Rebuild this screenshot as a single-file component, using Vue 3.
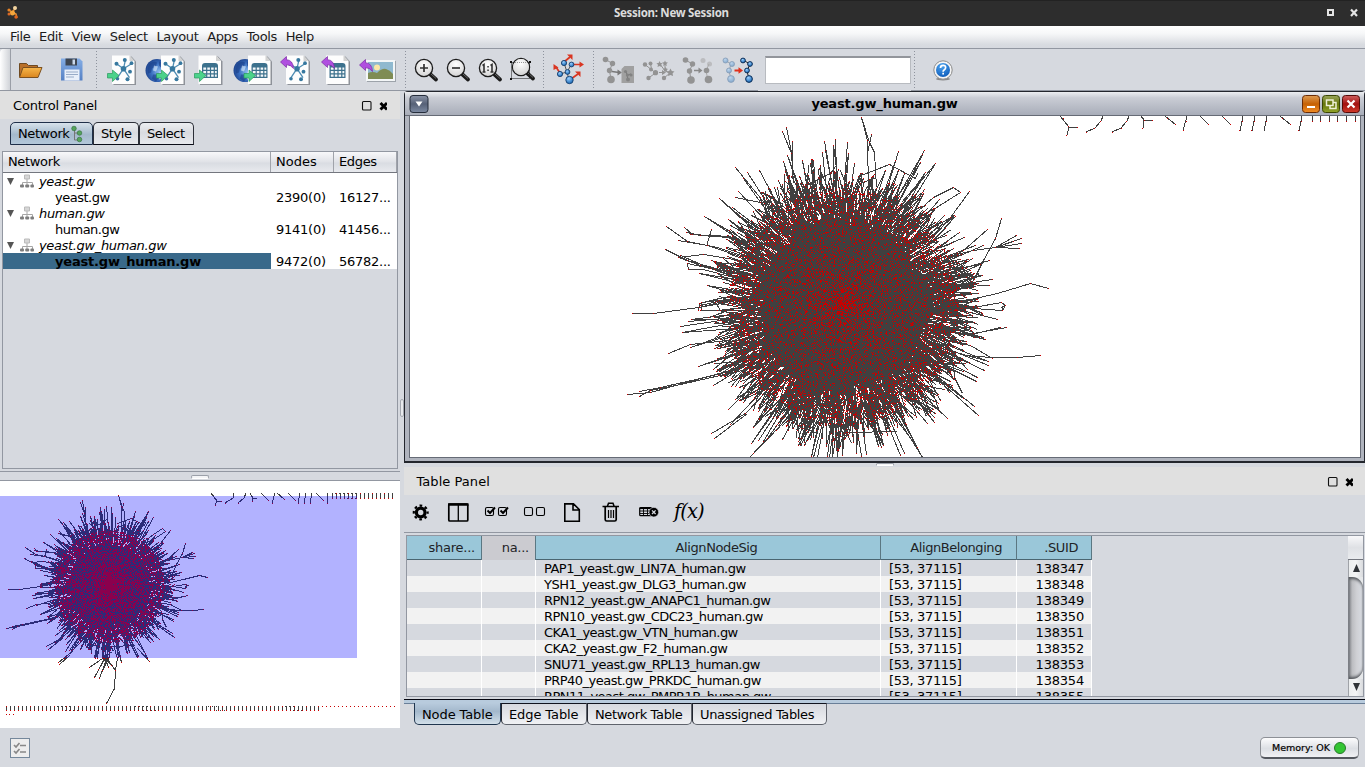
<script setup>
const menus = ['File', 'Edit', 'View', 'Select', 'Layout', 'Apps', 'Tools', 'Help']

const tree = [
  { group: true, name: 'yeast.gw' },
  { name: 'yeast.gw', nodes: '2390(0)', edges: '16127...' },
  { group: true, name: 'human.gw' },
  { name: 'human.gw', nodes: '9141(0)', edges: '41456...' },
  { group: true, name: 'yeast.gw_human.gw' },
  { name: 'yeast.gw_human.gw', nodes: '9472(0)', edges: '56782...', selected: true },
]

const rows = [
  ['PAP1_yeast.gw_LIN7A_human.gw', 138347],
  ['YSH1_yeast.gw_DLG3_human.gw', 138348],
  ['RPN12_yeast.gw_ANAPC1_human.gw', 138349],
  ['RPN10_yeast.gw_CDC23_human.gw', 138350],
  ['CKA1_yeast.gw_VTN_human.gw', 138351],
  ['CKA2_yeast.gw_F2_human.gw', 138352],
  ['SNU71_yeast.gw_RPL13_human.gw', 138353],
  ['PRP40_yeast.gw_PRKDC_human.gw', 138354],
  ['RPN11_yeast.gw_PMPR1B_human.gw', 138355],
]

const bottomTabs = ['Node Table', 'Edge Table', 'Network Table', 'Unassigned Tables']

/* ---- force-directed hairball, in thirds of a pixel ---- */
function rng(seed) {
  let a = seed
  return () => {
    a = (a + 0x6d2b79f5) | 0
    let t = Math.imul(a ^ (a >>> 15), 1 | a)
    t = (t + Math.imul(t ^ (t >>> 7), 61 | t)) ^ t
    return ((t ^ (t >>> 14)) >>> 0) / 4294967296
  }
}
const CX = 728
const CY = 582

const strands = [
  [[95, 608], [160, 609], [295, 590], [380, 575]],
  [[80, 853], [150, 845], [290, 808], [400, 778]],
  [[116, 842], [180, 832], [300, 805], [410, 778]],
  [[118, 859], [150, 840], [240, 822], [400, 785]],
  [[205, 730], [270, 703], [380, 690]],
  [[332, 968], [435, 910], [500, 840]],
  [[341, 985], [440, 908]],
  [[447, 1040], [500, 985], [560, 900]],
  [[460, 1030], [545, 940]],
  [[1320, 734], [1250, 742], [1177, 740], [1090, 735]],
  [[1177, 744], [1110, 705], [1030, 690]],
  [[1218, 650], [1120, 670], [1040, 665]],
  [[1200, 652], [1125, 668]],
  [[1192, 626], [1110, 605], [1030, 590]],
  [[1345, 534], [1291, 519], [1190, 550], [1110, 568], [1000, 580]],
  [[1204, 324], [1185, 385], [1150, 450], [1120, 510], [1060, 550]],
  [[1185, 410], [1120, 420], [1030, 440]],
  [[1249, 375], [1185, 410]], [[1262, 385], [1185, 410]],
  [[1264, 400], [1185, 410]], [[1256, 415], [1185, 410]], [[1240, 392], [1185, 410]],
  [[1202, 576], [1120, 592], [1030, 590]],
  [[1215, 586], [1205, 601], [1120, 594]],
  [[1202, 576], [1215, 586], [1203, 590], [1208, 601]],
  [[782, 20], [800, 90], [803, 240]],
  [[782, 20], [808, 95], [822, 125], [828, 230]],
  [[813, 72], [800, 130]],
  [[775, 197], [868, 162], [945, 205], [950, 190]],
  [[780, 218], [828, 202]],
  [[545, 62], [572, 130], [580, 220]],
  [[558, 52], [572, 125]], [[577, 93], [577, 200]],
  [[1060, 230], [1000, 262], [930, 320]],
  [[1080, 247], [1000, 296], [930, 330]],
  [[1060, 230], [1080, 247]],
  [[1108, 242], [1050, 320], [990, 390]],
  [[1160, 356], [1090, 420], [1030, 455]],
  [[620, 222], [690, 190], [705, 168]],
  [[262, 458], [264, 478], [310, 478], [400, 500]],
  [[262, 458], [330, 475], [430, 510]],
  [[295, 600], [296, 580], [370, 562], [440, 560]],
  [[300, 585], [350, 572], [430, 570]], [[302, 598], [302, 575], [380, 566]],
  [[296, 590], [390, 566]], [[300, 600], [350, 600], [430, 590]],
  [[345, 575], [360, 600], [440, 600]],
  [[740, 965], [890, 963]], [[550, 915], [610, 955], [655, 968]],
  [[700, 985], [740, 973], [752, 1000]],
  [[1060, 760], [1062, 800], [1085, 850]], [[1070, 600], [1070, 640]],
  [[333, 357], [318, 408]], [[405, 260], [480, 275], [540, 310]],
  [[253, 350], [275, 373], [380, 380], [450, 400]],
  [[257, 365], [300, 374], [390, 380], [440, 410]],
  [[270, 372], [390, 378]], [[235, 440], [310, 432], [420, 450]],
  [[235, 440], [300, 465], [400, 490]], [[240, 436], [310, 465]],
  [[194, 418], [260, 450], [400, 490]],
  [[197, 349], [260, 392], [350, 410], [440, 440]],
  [[233, 391], [320, 405], [430, 440]],
]
const tips = [
  [548, 154], [555, 184], [673, 92], [675, 120], [666, 127], [706, 88], [698, 106], [742, 95], [744, 130], [893, 122], [885, 150], [972, 120], [966, 132],
  [960, 155], [1006, 158], [974, 186], [973, 237], [405, 172], [440, 187], [430, 204], [477, 181], [415, 244], [358, 263], [395, 291],
  [311, 317], [384, 326], [391, 346], [296, 489], [322, 525], [354, 545], [265, 634], [272, 628], [241, 647], [247, 665], [293, 768],
  [341, 715], [345, 706], [271, 711], [340, 824], [347, 783], [372, 797], [385, 896], [391, 943], [452, 998], [458, 952], [474, 990],
  [490, 992], [545, 987], [593, 985], [604, 985], [632, 1038], [640, 1040], [652, 1040], [680, 1038], [688, 1040], [697, 1040],
  [712, 1040], [725, 1036], [768, 1030], [782, 1038], [798, 1032], [835, 1008], [850, 1005], [843, 1012], [900, 1035], [911, 1028],
  [965, 1040], [950, 1010], [982, 940], [1003, 937], [1040, 924], [1135, 914], [1122, 888], [1088, 865], [1128, 812], [1130, 800],
  [1153, 780], [1163, 766], [1163, 754], [1155, 688], [1148, 680], [1166, 450], [1140, 462], [1148, 404], [1125, 405], [1177, 506],
  [1147, 496], [1166, 525], [1133, 548], [1062, 315], [1033, 314], [1065, 318], [1018, 268], [1005, 295], [1077, 367], [1093, 382],
  [560, 134], [605, 150], [631, 160], [762, 160], [505, 234], [533, 211], [895, 180], [854, 180], [912, 190],
]

function buildNetwork(seed, s, ox, oy, nSpikes, nNodes, spread, tailed) {
  const r = rng(seed)
  const px = ([x, y]) => [Math.round(x * s + ox), Math.round(y * s + oy)]
  const edges = []
  const nodes = []
  const seg = (pts) => {
    edges.push('M' + pts.map((p) => px(p).map((v) => v + 0.5).join(' ')).join('L'))
  }
  const dot = (p) => {
    const [x, y] = px(p)
    nodes.push(`M${x} ${y + 0.5}h1`)
  }
  const wobble = (a) =>
    12 * Math.sin(a * 3 + 1) + 10 * Math.sin(a * 7 + 2) + 9 * Math.sin(a * 17) + 10 * Math.sin(a * 31 + 0.6)
  const polar = (a, d) => [CX + Math.cos(a) * d, CY + Math.sin(a) * d * (Math.sin(a) > 0 ? 1.05 : 1)]
  for (let i = 0; i < nSpikes; i++) {
    const a = r() * Math.PI * 2
    const len = r()
    const d = 268 + wobble(a) + 140 * Math.pow(len, 1.25)
    const tip = polar(a, d)
    seg([tip, polar(a + (r() - 0.5) * 0.2, d - 55 - 50 * r())])
    if (r() < 0.8) dot(tip)
  }
  for (const t of tips) {
    const a = Math.atan2(t[1] - CY, t[0] - CX)
    seg([t, polar(a + (r() - 0.5) * 0.1, 290)])
    if (r() < 0.5) seg([t, polar(a + (r() - 0.5) * 0.16, 290)])
    dot(t)
  }
  for (const line of strands) {
    seg(line)
    dot(line[0])
    if (line.length > 2) dot(line[1])
  }
  if (tailed) {
    const tail = [
      [[780, 1035], [764, 1120], [758, 1230], [708, 1325]],
      [[700, 1030], [764, 1120]], [[745, 1000], [600, 1098]], [[710, 1020], [632, 1160]],
      [[715, 1030], [664, 1168]], [[705, 1030], [660, 1110]], [[730, 1030], [685, 1120]],
      [[500, 990], [407, 1070]], [[480, 1015], [415, 1080]], [[900, 980], [978, 1063]],
      [[790, 1020], [800, 1068]], [[690, 1030], [742, 1090]], [[700, 1040], [720, 1100]],
    ]
    tail.forEach((l) => { seg(l); dot(l[l.length - 1]) })
  }
  for (let i = 0; i < nNodes; i++) {
    const a = r() * Math.PI * 2
    const d = 345 * Math.pow(r(), spread)
    dot(polar(a, d))
  }
  const core = []
  for (let i = 0; i < 150; i++) {
    const a = (i / 150) * Math.PI * 2
    const p = polar(a, 244 + wobble(a) * 0.6 + r() * 18)
    core.push(`${p[0] * s + ox} ${p[1] * s + oy}`)
  }
  return { edges: edges.join(''), nodes: nodes.join(''), core: core.join(',') }
}

const main = buildNetwork(7, 1 / 3, 600 - 410, 110 - 116, 2300, 8200, 0.76, false)
const mini = buildNetwork(21, 0.1593, -6.8, 577.3 - 534 * 0.16 - 481, 1000, 6800, 0.8, true)

/* small components laid out to the right of the main one */
const satellites =
  'M650 0L659 11L668 12M659 11L657 19M693 0L691 5L685 12L676 16M719 0L717 5L711 12L702 16M731 0L734 4L743 5M734 4L733 12' +
  'M755 0L766 9M777 0L773 15M790 0L799 9M812 0L821 9M833 0L830 15M845 0L842 15M857 0L854 15M870 0L881 9M892 0L889 15'
const satelliteDots =
  'M653 2h1M667 11h1M656 19h1M658 10h1M690 5h1M684 12h1M676 16h1M716 5h1M711 12h1M702 16h1M734 4h1M742 4h1M732 12h1M765 8h1M757 2h1M776 5h1M773 14h1M798 8h1M820 8h1M814 2h1M832 5h1M829 14h1M844 5h1M841 14h1M856 5h1M880 8h1M872 2h1M891 5h1M888 14h1'
const pairs = Array.from({ length: 6 }, (_, i) => 901.5 + i * 8.6)
const pairEdges = pairs.map((x) => `M${Math.round(x)}.5 0v5`).join('')
const pairDots = pairs.map((x) => `M${Math.round(x)} 5.5h1`).join('')

const miniSat =
  'M211 12L217 20L221 20M217 20L215 24M234 12L233 17L225 22M246 12L244 17L238 22M250 12L253 17L257 17M253 17L252 20M261 12L268 19M275 12L272 22M277 12L284 18M288 12L295 19M300 12L298 22M306 12L304 22M312 12L310 22M316 12L323 19M328 12L327 22'
const tickRow = (from, to, y, h) => {
  let e = ''
  let n = ''
  for (let x = from; x <= to; x += 4) {
    e += `M${x}.5 ${y}v${h}`
    if (x % 3 === 0) n += `M${x} ${y + 0.5}h1`
    n += `M${x} ${y + h - 0.5}h1`
  }
  return [e, n]
}
const topTicks = tickRow(332, 394, 12, 6)
const bottomTicks = tickRow(6, 320, 225, 5)
let looseDots = 'M6 233.5h1M9 233.5h1M13 233.5h1'
for (let x = 322; x < 396; x += 4) looseDots += `M${x} 225.5h1`
let hooks = ''
for (const x of [57, 61, 65, 69, 135, 139, 143, 147, 208, 212, 216, 285, 289, 293]) hooks += `M${x} 225.5h1`
for (const x of [65, 69, 73, 77, 143, 147, 151, 155, 216, 220, 224, 293, 297, 301]) hooks += `M${x} 229.5h1`
for (const x of [335, 339, 343, 347, 351, 355]) hooks += `M${x} 12.5h1`
for (const x of [347, 351, 355]) hooks += `M${x} 17.5h1`
</script>

<template>
  <div class="app">
    <svg class="defs" width="0" height="0">
      <defs>
        <linearGradient id="gFolder" x1="0" y1="0" x2="0" y2="1"><stop offset="0" stop-color="#f7b64a" /><stop offset="1" stop-color="#d9851e" /></linearGradient>
        <linearGradient id="gDisk" x1="0" y1="0" x2="0" y2="1"><stop offset="0" stop-color="#85aee6" /><stop offset="1" stop-color="#5580c4" /></linearGradient>
        <radialGradient id="gGlobe" cx=".6" cy=".55" r=".7"><stop offset="0" stop-color="#8fbdf0" /><stop offset=".5" stop-color="#3a6fc0" /><stop offset="1" stop-color="#16367c" /></radialGradient>
        <radialGradient id="gLens" cx=".5" cy=".3" r=".7"><stop offset="0" stop-color="#fff" /><stop offset="1" stop-color="#d4d4d4" /></radialGradient>
        <radialGradient id="gBall" cx=".4" cy=".3" r=".7"><stop offset="0" stop-color="#9ad0ff" /><stop offset="1" stop-color="#1767b5" /></radialGradient>
        <radialGradient id="gHelp" cx=".4" cy=".2" r=".9"><stop offset="0" stop-color="#4da3ee" /><stop offset="1" stop-color="#0a58b8" /></radialGradient>
        <g id="page">
          <path d="M1.500 1.500h18l4.500 5v23.500h-22.500z" fill="#8e9299" />
          <path d="M0 .5h17.500l5 5.500v23H0z" fill="#fdfdfd" />
          <path d="M17.500.5v5.500H22.500z" fill="#d2d2d2" />
        </g>
        <g id="netGlyph">
          <path d="M0 0L2-9M0 0L8-5M0 0L-7-5M0 0L6 9M0 0L-6 9" stroke="#4f8db3" stroke-width="1.300" />
          <g fill="#37789f"><circle r="2.800" /><circle cx="1.300" cy="-8.800" r="2" /><circle cx="8" cy="-5.500" r="1.900" /><circle cx="-7" cy="-5" r="2" /><circle cx="6.500" cy="3" r="1.900" /><circle cx="4" cy="10.500" r="2" /><circle cx="-6" cy="10" r="1.800" /></g>
        </g>
        <g id="gridGlyph">
          <path d="M0 3q0-3 3-3h10q3 0 3 3v12H0z" fill="#3c718d" />
          <path d="M1.300 4.500h2.800v2.300H1.300zm4 0h2.600v2.300H5.300zm3.800 0h2.600v2.300H9.100zm3.800 0h1.900v2.300h-1.900zM1.300 8h2.800v2.300H1.300zm4 0h2.600v2.300H5.300zm3.800 0h2.600v2.300H9.100zm3.800 0h1.900v2.300h-1.900zM1.300 11.500h2.800v2.300H1.300zm4 0h2.600v2.300H5.300zm3.800 0h2.600v2.300H9.100zm3.800 0h1.900v2.300h-1.900z" fill="#f4f7f9" />
        </g>
        <path id="inArrow" d="M0 3.500h5V0l6.500 5.500L5 11.500V8H0z" fill="#4bd28b" stroke="#2b9a5c" stroke-width=".7" />
        <path id="outArrow" d="M0 5.500L6 0v3.200q6.500.300 7 8.800Q10 8 6 8.200V11z" fill="#b04fe0" stroke="#7b2ba4" stroke-width=".7" />
        <g id="globe">
          <circle r="11.500" fill="url(#gGlobe)" />
          <path d="M-7-7Q-3-10 0-8l-1 4-4 2-1 4-3 1Q-10-3-7-7zM2-9q6 1 7 6l-4 1-3-3zM-4 4l5 0 1 3-3 4-4-3z" fill="#1b3f88" opacity=".6" />
          <path d="M-3-5l4 1-2 5-3-1zM2 2l5-1-2 7-3 1z" fill="#d6e9fc" opacity=".65" />
        </g>
        <g id="lens">
          <path d="M6.500 6.500l5.500 5" stroke="#1b1b1b" stroke-width="3.800" stroke-linecap="round" />
          <path d="M7 6l5 4.500" stroke="#777" stroke-width=".8" />
          <circle r="8.600" fill="url(#gLens)" stroke="#1c1c1c" stroke-width="1.300" />
        </g>
        <g id="grayNet">
          <path d="M0 0l7 4-3 7 1.500 9" stroke="currentColor" fill="none" />
          <g fill="currentColor"><circle r="2.800" /><circle cx="7" cy="4" r="2.700" /><circle cx="4" cy="11" r="2.700" /><circle cx="5.500" cy="20" r="3.800" /></g>
        </g>
      </defs>
    </svg>

    <header class="titlebar">
      <svg class="logo" width="12" height="14" viewBox="0 0 12 14"><path d="M9 2L5 6 2 4M5 6l4 2 1 4M5 6L2 8M5 6l3-3" stroke="#e88b2d" stroke-width="1.500" fill="none" /><circle cx="8" cy="2" r="2" fill="#f2d4a0" /><circle cx="5.500" cy="7" r="2.500" fill="#f3a63d" /><circle cx="9" cy="11" r="1.700" fill="#df641d" /><circle cx="2" cy="4" r="1.600" fill="#e88325" /><circle cx="2" cy="8" r="1.500" fill="#db6924" /></svg>
      <span class="session">Session: New Session</span>
      <svg class="wm" width="32" height="10" viewBox="0 0 32 10"><path d="M2 2h5v5H2z" fill="none" stroke="#e4e4e4" stroke-width="2" /><path d="M25 1.500l6 6.500M31 1.500L25 8" stroke="#e4e4e4" stroke-width="2.200" /></svg>
    </header>

    <nav class="menubar"><span v-for="m in menus" :key="m">{{ m }}</span></nav>

    <div class="toolbar">
      <i class="grip"></i>
      <svg width="40" height="41" viewBox="10 49 40 41">
        <path d="M19.500 63.500h7l2 2h9v11h-18z" fill="#b9702a" stroke="#6f4a22" />
        <path d="M23 67.500h19l-4 10H19.500z" fill="url(#gFolder)" stroke="#7b5020" />
      </svg>
      <svg width="44" height="41" viewBox="50 49 44 41">
        <path d="M61 58.500h18.500l3 3V80.500H61z" fill="url(#gDisk)" />
        <path d="M65.500 58.500h11.500v7H65.500z" fill="#3e4652" /><path d="M72.500 59.500h2.500v5h-2.500z" fill="#cad8ea" />
        <path d="M64.500 69.500h15v11h-15z" fill="#e9effa" /><path d="M66 72h12M66 74.500h12M66 77h8" stroke="#98abc8" />
      </svg>
      <i class="sep"></i>
      <svg width="44" height="41" viewBox="99 49 44 41"><use href="#page" x="112" y="55" /><use href="#netGlyph" x="123.500" y="68.700" /><use href="#inArrow" x="107.500" y="70" /></svg>
      <svg width="44" height="41" viewBox="143 49 44 41"><use href="#globe" x="157" y="70.500" /><use href="#page" x="161" y="55" /><use href="#netGlyph" x="172.500" y="68.700" /><use href="#inArrow" x="156.500" y="70" /></svg>
      <svg width="42" height="41" viewBox="187 49 42 41"><use href="#page" x="198.500" y="55" /><use href="#gridGlyph" x="202" y="63" /><use href="#inArrow" x="194.500" y="70" /></svg>
      <svg width="46" height="41" viewBox="229 49 46 41"><use href="#globe" x="245" y="70.500" /><use href="#page" x="248" y="55" /><use href="#gridGlyph" x="251.500" y="63" /><use href="#inArrow" x="244" y="70" /></svg>
      <svg width="40" height="41" viewBox="275 49 40 41"><use href="#page" x="286" y="55" /><use href="#netGlyph" x="297" y="68.700" /><use href="#outArrow" x="280.500" y="56.500" /></svg>
      <svg width="40" height="41" viewBox="315 49 40 41"><use href="#page" x="326" y="55" /><use href="#gridGlyph" x="329.500" y="63" /><use href="#outArrow" x="321.500" y="56.500" /></svg>
      <svg width="44" height="41" viewBox="355 49 44 41">
        <path d="M367 61h29v21h-29z" fill="#9da3aa" /><path d="M366 60h29v21h-29z" fill="#f3f6f7" /><path d="M368 62h25v17h-25z" fill="#8fb9cf" />
        <circle cx="377" cy="67.500" r="3" fill="#fbe6a6" /><path d="M368 73q5-2 9 0 5-5 9-4 4 1 7 5v5h-25z" fill="#7f8c54" />
        <use href="#outArrow" x="359.500" y="59.500" />
      </svg>
      <i class="sep s1"></i>
      <svg class="z0" width="32" height="41" viewBox="410 49 32 41"><use href="#lens" x="424" y="68" /><path d="M424 64v8M420 68h8" stroke="#333" stroke-width="1.700" /></svg>
      <svg width="32" height="41" viewBox="442 49 32 41"><use href="#lens" x="456" y="68" /><path d="M452 68h8" stroke="#333" stroke-width="1.700" /></svg>
      <svg width="32" height="41" viewBox="474 49 32 41"><use href="#lens" x="488" y="68" /><path d="M482.500 65.500l1.500-1v7.500M482.500 72h3M490.500 65.500l1.500-1v7.500M490.500 72h3" fill="none" stroke="#333" stroke-width="1.600" /><path d="M487.300 66h1.500v1.500h-1.500zm0 3.500h1.500v1.500h-1.500z" fill="#333" /></svg>
      <svg width="32" height="41" viewBox="506 49 32 41"><use href="#lens" x="521" y="67" /><path d="M511.500 62.500h18v16h-18z" fill="none" stroke="#111" stroke-dasharray="1 1" /><circle cx="521" cy="67" r="7.900" fill="url(#gLens)" /><path d="M515 62.500h12" stroke="#999" stroke-dasharray="1 1" /><path d="M510 61h2v2h-2zm19 0h2v2h-2zm-19 17h2v2h-2z" fill="#111" /></svg>
      <i class="sep s2"></i>
      <svg class="z0" width="40" height="41" viewBox="548 49 40 41">
        <g stroke="#d93622" stroke-width="1.700" fill="#d93622"><path d="M564 62l6-5M572 64.500h8M560 73l-4-6M571 79l7-5" /><path d="M567 54.500h5.500v5.500zM579.500 61.500l4.500 3-4.500 3zM553.500 70v-6l5 3.500zM575 71.500h5.500v5.500z" stroke="none" /></g>
        <path d="M564 63l3 9 4-7M560 74l7-2 2 8" stroke="#555" fill="none" />
        <g fill="url(#gBall)" stroke="#173f6d" stroke-width=".9"><circle cx="564" cy="63" r="2.600" /><circle cx="571.500" cy="64.500" r="2.400" /><circle cx="560" cy="74" r="2.600" /><circle cx="567.500" cy="72" r="2.400" /><circle cx="569.500" cy="80" r="3.700" /></g>
      </svg>
      <i class="sep s2"></i>
      <svg class="z0 muted" width="40" height="41" viewBox="598 49 40 41"><use href="#grayNet" x="605.500" y="59.500" /><path d="M612 71.500l7 1" stroke="#777" stroke-width="1.300" /><path d="M617.500 69.500l4.500 3-4.500 3z" fill="#777" /><path d="M621.500 69l3-3h9.500v17h-12.500z" fill="#a0a0a0" /><path d="M626 71l1 4 1 5M627 75l4-1" stroke="#777" fill="none" /><g fill="#828282"><circle cx="625.500" cy="71.500" r="1.600" /><circle cx="627.500" cy="75" r="1.600" /><circle cx="631" cy="75" r="1.600" /><circle cx="628" cy="79.500" r="2" /></g></svg>
      <svg class="muted" width="40" height="41" viewBox="638 49 40 41"><g fill="#939393" stroke="#939393"><path d="M645 64.500l10 8M650.500 63.500l1 5.500M655.500 73l-7 5M659 72.500h4M660 64l5 7 5 2-6 5M665 64l0 6" fill="none" /><g stroke="none"><circle cx="645" cy="64.500" r="2.200" /><circle cx="650.500" cy="63.500" r="2" /><circle cx="651" cy="69.500" r="2" /><circle cx="655.500" cy="72.700" r="2.600" /><circle cx="648.500" cy="78" r="2.200" /><circle cx="664" cy="78" r="2.200" /><path d="M662 70l4 2.500-4 2.500zM659.500 61l1 2 2.200.3-1.600 1.500.5 2.200-2.100-1-2 1 .5-2.200-1.600-1.500 2.200-.3zM665 60.500l.9 1.800 2 .3-1.500 1.300.4 2-1.800-.9-1.800.9.4-2-1.500-1.300 2-.3zM670.500 68.500l1.300 2.500 2.700.4-1.900 1.900.4 2.700-2.500-1.100-2.500 1.100.4-2.700-1.900-1.900 2.700-.4zM665.500 67l.8 1.600 1.700.3-1.200 1.200.3 1.700-1.600-.8-1.600.8.3-1.700-1.200-1.200 1.700-.3z" /></g></g></svg>
      <svg class="muted" width="40" height="41" viewBox="678 49 40 41"><use href="#grayNet" x="685.500" y="60" /><g fill="#bbbcbf"><circle cx="703" cy="60.500" r="2.500" /><circle cx="709.500" cy="64" r="2.500" /></g><path d="M709 64l-3 7 2 9" stroke="#aaa" fill="none" /><circle cx="706.500" cy="70.500" r="2.800" fill="#939393" /><circle cx="708.500" cy="79.500" r="3.800" fill="#939393" /><path d="M694 70.500h6" stroke="#888" stroke-width="1.500" /><path d="M698.500 67.500l4 3-4 3z" fill="#888" /></svg>
      <svg width="40" height="41" viewBox="718 49 40 41">
        <g opacity=".42"><path d="M725 60l6 4-2 7 2 8" stroke="#456" fill="none" /><g fill="url(#gBall)" stroke="#174a80" stroke-width=".8"><circle cx="725.500" cy="60.500" r="2.500" /><circle cx="732" cy="64" r="2.500" /><circle cx="729" cy="70.500" r="2.500" /><circle cx="731" cy="79" r="3.400" /></g></g>
        <path d="M743 60l7 4-3 7 2 8" stroke="#222" fill="none" /><g fill="url(#gBall)" stroke="#0e2f58" stroke-width="1"><circle cx="743" cy="60.500" r="2.400" /><circle cx="750" cy="64" r="2.400" /><circle cx="747" cy="70.500" r="2.400" /><circle cx="749" cy="79" r="3.400" /></g>
        <path d="M734.500 70.500h5" stroke="#e0301c" stroke-width="2" /><path d="M738.500 67.300l4.500 3.200-4.500 3.200z" fill="#e0301c" />
      </svg>
      <div class="searchwrap"><div class="search"></div></div>
      <i class="sep s3"></i>
      <svg class="help" width="40" height="41" viewBox="923 49 40 41"><ellipse cx="943" cy="79" rx="7" ry="1.500" fill="#888" /><circle cx="943" cy="70" r="9.200" fill="#f5f5f5" stroke="#8c8c8c" /><circle cx="943" cy="70" r="7" fill="url(#gHelp)" /><path d="M940.500 68q0-2.600 2.600-2.600t2.500 2.300q0 1.300-1.500 2.200-1 .6-1 1.800" fill="none" stroke="#fff" stroke-width="1.700" /><path d="M942.300 72.800h1.700v1.800h-1.700z" fill="#fff" /></svg>
    </div>

    <div class="body">
      <aside class="left">
        <div class="phead"><span>Control Panel</span>
          <svg width="26" height="12" viewBox="0 0 26 12"><rect x="1.500" y="1.500" width="8.500" height="8.500" rx="1" fill="none" stroke="#111" stroke-width="1.100" /><path d="M19.500 3l6.500 6.500M26 3l-6.500 6.500" stroke="#000" stroke-width="2.900" /></svg>
        </div>
        <div class="tabs">
          <span class="tab on">Network<svg width="12" height="18" viewBox="0 0 12 18"><path d="M3.500 3v12h5M3.500 8h5" fill="none" stroke="#777" /><g fill="#56a35c" stroke="#2d6c37" stroke-width=".6"><circle cx="3" cy="3.500" r="2.300" /><circle cx="8.500" cy="8" r="2.300" /><circle cx="8.500" cy="14.500" r="2.300" /></g></svg></span>
          <span class="tab t2">Style</span><span class="tab t3">Select</span>
        </div>
        <div class="netbox">
          <div class="nrow nhead"><span>Network</span><span>Nodes</span><span>Edges</span></div>
          <div v-for="(t, i) in tree" :key="i" class="nrow" :class="{ sel: t.selected, grp: t.group }">
            <span class="nname">
              <svg v-if="t.group" width="31" height="16" viewBox="0 0 31 16"><path d="M4 5h7L7.500 12z" fill="#555" /><g stroke="#a6a6a6"><path d="M24 6v7M19.500 12v-2.500h10V12" fill="none" /></g><path d="M21.500 2h5v4h-5z" fill="#d6d6d6" stroke="#bbb" /><g fill="#7d7d7d"><rect x="17" y="11.500" width="4" height="3" rx="1" /><rect x="22.200" y="11.500" width="4" height="3" rx="1" /><rect x="27.400" y="11.500" width="3.600" height="3" rx="1" /></g></svg>
              <b>{{ t.name }}</b>
            </span>
            <span>{{ t.nodes }}</span><span>{{ t.edges }}</span>
          </div>
        </div>
        <div class="divider"><i></i></div>
        <svg class="mini" width="400" height="247" viewBox="0 0 400 247" shape-rendering="crispEdges">
          <polygon :points="mini.core" fill="#404040" />
          <g fill="none" stroke="#404040"><path :d="mini.edges" /><path :d="miniSat" /><path :d="topTicks[0]" /><path :d="bottomTicks[0]" /><path :d="hooks" /></g>
          <g stroke="#c80000"><path :d="mini.nodes" /><path :d="topTicks[1]" /><path :d="bottomTicks[1]" /><path :d="looseDots" /><path d="M215 24.500h1M221 20.500h1M225 22.500h1M238 22.500h1M252 20.500h1M268 19.500h1M272 22.500h1M284 18.500h1M295 19.500h1M298 22.500h1M304 22.500h1M310 22.500h1M323 19.500h1M327 22.500h1" /></g>
          <rect y="15" width="357" height="162" fill="#00f" fill-opacity=".3" />
        </svg>
      </aside>

      <i class="vsplit"><i></i></i>

      <main class="right">
        <section class="frame">
          <div class="ftitle">
            <svg width="20" height="20" viewBox="0 0 20 20"><defs><linearGradient id="gBtn" x1="0" y1="0" x2="0" y2="1"><stop offset="0" stop-color="#8a93a6" /><stop offset=".5" stop-color="#566177" /><stop offset="1" stop-color="#7d8aa2" /></linearGradient></defs><rect x="1" y="1.500" width="18" height="17" rx="3" fill="url(#gBtn)" stroke="#252d3b" /><path d="M6.500 7.500h7L10 12.500z" fill="#fff" /></svg>
            <b>yeast.gw_human.gw</b>
            <svg width="60" height="20" viewBox="0 0 60 20">
              <defs>
                <linearGradient id="gMin" x1="0" y1="0" x2="0" y2="1"><stop offset="0" stop-color="#dd9c54" /><stop offset=".5" stop-color="#c66104" /><stop offset="1" stop-color="#f08d26" /></linearGradient>
                <linearGradient id="gMax" x1="0" y1="0" x2="0" y2="1"><stop offset="0" stop-color="#9aa65c" /><stop offset=".5" stop-color="#65750a" /><stop offset="1" stop-color="#92a52b" /></linearGradient>
                <linearGradient id="gClose" x1="0" y1="0" x2="0" y2="1"><stop offset="0" stop-color="#d06060" /><stop offset=".5" stop-color="#a31210" /><stop offset="1" stop-color="#d03a2a" /></linearGradient>
              </defs>
              <rect x="2.500" y="1.500" width="17" height="17" rx="3" fill="url(#gMin)" stroke="#6a2c06" /><path d="M7 13h8" stroke="#fff" stroke-width="2" />
              <rect x="22.500" y="1.500" width="17" height="17" rx="3" fill="url(#gMax)" stroke="#3b4605" /><path d="M26.500 6h6.500v5.500h-6.500zM33 8.500h3v6h-6V12" fill="none" stroke="#eef0d8" stroke-width="1.500" />
              <rect x="42.500" y="1.500" width="17" height="17" rx="3" fill="url(#gClose)" stroke="#540a08" /><path d="M47.500 6.500l7 7M54.500 6.500l-7 7" stroke="#fff" stroke-width="2.200" />
            </svg>
          </div>
          <svg class="view" width="950" height="341" viewBox="0 0 950 341" shape-rendering="crispEdges">
            <polygon :points="main.core" fill="#404040" />
            <path :d="main.edges" fill="none" stroke="#404040" />
            <path :d="main.nodes" stroke="#c80000" />
            <path :d="satellites" fill="none" stroke="#404040" />
            <path :d="pairEdges" stroke="#404040" />
            <path :d="satelliteDots" stroke="#c80000" transform="translate(0 .5)" />
            <path :d="pairDots" stroke="#c80000" />
          </svg>
        </section>
        <div class="hsplit"><i></i></div>
        <div class="phead"><span>Table Panel</span>
          <svg width="26" height="12" viewBox="0 0 26 12"><rect x="1.500" y="1.500" width="8.500" height="8.500" rx="1" fill="none" stroke="#111" stroke-width="1.100" /><path d="M19.500 3l6.500 6.500M26 3l-6.500 6.500" stroke="#000" stroke-width="2.900" /></svg>
        </div>
        <div class="ttools">
          <svg width="270" height="37" viewBox="404 495 270 37" fill="none" stroke="#000">
            <circle cx="420.700" cy="512.500" r="4.300" stroke-width="3.200" /><circle cx="420.700" cy="512.500" r="6.900" stroke-width="2.200" stroke-dasharray="2.700 2.719" stroke-dashoffset="1.350" />
            <rect x="448.800" y="504" width="19" height="17" rx="1" stroke-width="1.700" /><path d="M448 504.500h20.500" stroke-width="2.500" /><path d="M458.300 504v17" stroke-width="1.300" />
            <g id="chk"><rect x="485.500" y="507.500" width="8" height="8" rx="1.500" stroke-width="1.100" /><path d="M487.500 510.500l2.500 2.500 5-5.500" stroke-width="1.900" /></g>
            <use href="#chk" x="13" />
            <rect x="524.500" y="507.500" width="8" height="8" rx="1.500" stroke-width="1.100" /><rect x="536.500" y="507.500" width="8" height="8" rx="1.500" stroke-width="1.100" />
            <path d="M564.800 503.900h8.700l5.800 5.600v11.700h-14.500zM573 504v6h6.500" stroke-width="1.600" />
            <path d="M602.500 506.500h16.500M607.500 506l1-2.700h4.500l1 2.700" stroke-width="1.500" /><path d="M605.200 506.500v13q0 1.500 1.500 1.500h8q1.500 0 1.500-1.500v-13" stroke-width="1.700" /><path d="M608.500 510v8M611 510v8M613.500 510v8" stroke-width="1.200" />
            <rect x="639.700" y="507.700" width="12" height="8" rx="1" stroke-width="1.200" /><path d="M639.500 508.300h12" stroke-width="1.500" /><path d="M643.500 508v8M647.500 508v8M640 511h10M640 513.500h10" stroke-width=".9" />
            <circle cx="653.800" cy="512.200" r="4.800" fill="#000" stroke="#d6d9df" stroke-width=".6" /><path d="M652 510.400l3.600 3.600M655.600 510.400L652 514" stroke="#d6d9df" stroke-width="1.300" />
          </svg>
          <em>f(x)</em>
        </div>
        <div class="tbox">
          <div class="tbl">
            <div class="trow thead"><span>share...</span><span>na...</span><span>AlignNodeSig</span><span>AlignBelonging</span><span>.SUID</span></div>
            <div v-for="r in rows" :key="r[1]" class="trow"><span></span><span></span><span>{{ r[0] }}</span><span>[53, 37115]</span><span>{{ r[1] }}</span></div>
          </div>
          <div class="sbar">
            <div class="shead"></div>
            <div class="sbtn"><svg width="15" height="15"><path d="M4 12h7L7.500 4z" fill="#303338" /></svg></div>
            <div class="track"><i></i></div>
            <div class="sbtn"><svg width="15" height="15"><path d="M4 4h7L7.500 12z" fill="#303338" /></svg></div>
          </div>
        </div>
        <div class="tline"></div>
        <div class="btabs"><span v-for="(b, i) in bottomTabs" :key="b" :class="{ on: i === 0 }">{{ b }}</span></div>
      </main>
    </div>

    <footer class="status">
      <div class="task"><svg width="14" height="14" viewBox="0 0 14 14"><path d="M1 4l2 2 3.500-4M1 10l2 2 3.500-4M7 4.500h6M7 11h6" fill="none" stroke="#888" stroke-width="1.700" /></svg></div>
      <div class="memory"><span>Memory: OK</span><i></i></div>
    </footer>
  </div>
</template>

<style>
html, body { margin: 0; overflow: hidden; }
</style>

<style scoped>
.app { width: 1365px; height: 767px; background: #d6d9df; font: 13px/16px "DejaVu Sans", sans-serif; color: #000; display: flex; flex-direction: column; overflow: hidden; white-space: nowrap; }
.app * { box-sizing: border-box; }
svg { display: block; flex: none; }
.defs { position: absolute; }
.titlebar { height: 26px; flex: none; background: #2d2d2d; border-top: 1px solid #222; display: flex; align-items: center; padding: 0 7px 0 7px; }
.logo { margin-right: 595px; margin-top: -1px; }
.session { font: bold 11.500px/16px "Noto Sans", sans-serif; color: #dcdcdc; width: 115px; letter-spacing: -.3px; margin-top: -1px; }
.wm { margin-left: auto; margin-top: -1px; }
.menubar { height: 23px; flex: none; background: linear-gradient(#fff, #f6f7f8 35%, #d8dbe0 85%, #d6d9df); border-bottom: 1px solid #9297a1; display: flex; padding: 3px 0 0 10px; gap: 8.800px; color: #1c1c1c; }
.menubar span { letter-spacing: -.37px; }
.toolbar { height: 42px; flex: none; display: flex; border-bottom: 1px solid #9297a1; }
.grip { width: 11px; margin-right: -1px; background: linear-gradient(90deg, #fff, #d0d3d8); border-right: 1px solid #9a9ea7; border-radius: 4px 0 0 0; }
.sep { width: 1px; margin: 2px 2px; background: repeating-linear-gradient(#8e939d 0 1px, transparent 1px 3px); }
.s1 { margin-left: 6px; }
.z0 { margin-left: 2px; }
.s2 { margin-left: 5px; }
.s3 { margin-left: 3px; }
.muted { color: #939393; }
.searchwrap { width: 153px; height: 42px; background: #d6d9df; padding: 7px 0 0 7px; }
.search { height: 28px; background: #fff; border: 1px solid #b8bbc0; border-top: 2px solid #92959b; }
.help { margin-left: 6px; }
.body { display: flex; height: 637px; flex: none; }
.left { width: 400px; }
.phead { height: 28px; background: #e0e0e0; display: flex; align-items: center; justify-content: space-between; padding: 1px 13.500px 0 13px; letter-spacing: -.15px; }
.tabs { display: flex; height: 23px; margin: 3px 0 0 10px; }
.tab { border: 1px solid #2c2f38; border-bottom-color: #0b0d18; border-radius: 5px 5px 0 0; padding: 3px 7px 0; background: linear-gradient(#eceef1, #d9dbe0 45%, #e7e9ed); margin-right: 0; letter-spacing: -.4px; }
.t2 { width: 46px; }
.t3 { width: 55px; }
.tab.on { display: flex; width: 83px; background: linear-gradient(#d7e2eb, #a4b9cc 55%, #b4c8da); border-color: #1f2f49; padding-right: 0; }
.tab.on svg { margin: -1px 0 0 2px; }
.netbox { margin: 6px 0 0 2px; width: 396px; height: 318px; border: 1px solid #9297a1; }
.nrow { display: grid; grid-template-columns: 268px 63px 63px; height: 16px; line-height: 18px; background: #fff; letter-spacing: -.25px; }
.nrow > span { padding-left: 5px; overflow: hidden; }
.nhead { height: 21px; line-height: 20px; background: linear-gradient(#f8f8fa, #e0e2e7 50%, #d9dce2 55%, #e8eaee); border-bottom: 1px solid #73767e; letter-spacing: -.35px; }
.nhead > span:nth-child(2) { letter-spacing: 0; }
.nhead > span { border-right: 1px solid #a0a3aa; }
.nrow .nname { padding-left: 0; display: flex; }
.nname b { font-weight: normal; margin-left: 52px; letter-spacing: -.5px; }
.grp .nname b { font-style: italic; margin-left: 5px; letter-spacing: -.35px; }
.sel .nname { background: #39698a; }
.sel .nname b { font-weight: bold; letter-spacing: -.18px; }
.divider { height: 10px; margin-top: 2px; border-top: 1px solid #9297a1; border-bottom: 1px solid #9297a1; }
.divider i, .hsplit i { display: block; width: 18px; height: 4px; margin: 3px auto 0; border: 1px solid #9ba0a9; border-bottom-color: #fff; border-radius: 2px; background: #f4f5f7; }
.mini { background: #fff; }
.vsplit { width: 4px; padding-top: 308px; }
.vsplit i { display: block; width: 4px; height: 18px; border: 1px solid #a4a8b0; border-radius: 2px; background: #e8eaed; }
.right { width: 961px; }
.frame { height: 372px; border: 1px solid #23262d; border-bottom-width: 2px; border-radius: 4px 4px 0 0; background: #b0b4be; padding: 0 4px 4px 5px; }
.ftitle { height: 24px; margin: 0 -4px 0 -5px; padding: 2px 4px 0; background: linear-gradient(#eceef1, #cacdd5 25%, #a8adb9); border-bottom: 1px solid #666b76; display: flex; align-items: flex-start; justify-content: space-between; }
.ftitle b { line-height: 19px; margin-left: 40px; letter-spacing: -.17px; }
.view { background: #fff; box-shadow: 0 0 0 1px #666b76; }
.hsplit { height: 4px; }
.hsplit i { height: 3px; margin-top: 0; }
.right .phead { padding-left: 12.500px; padding-right: 12.500px; letter-spacing: .05px; }
.ttools { height: 38px; display: flex; border-bottom: 1px solid #9297a1; }
.ttools em { font: italic 19.500px/34px "DejaVu Serif", serif; letter-spacing: -.9px; }
.tbox { height: 162px; margin: 2px 1px 0 2px; border: 1px solid #9297a1; display: flex; justify-content: space-between; overflow: hidden; }
.trow { display: grid; grid-template-columns: 75px 54px 345px 136px 75px; height: 16px; line-height: 17px; letter-spacing: -.36px; }
.trow:nth-child(odd) { background: #f2f2f2; }
.trow:nth-child(even) { background: #d6d9df; }
.trow > span { border-right: 1px solid #fff; padding-left: 8px; }
.trow > span:nth-child(3) { letter-spacing: -.53px; }
.trow > span:last-child { text-align: right; padding: 0 7px 0 0; letter-spacing: -.2px; }
.tbl .thead { height: 24px; line-height: 24px; background: #9ac7d9; border-bottom: 1px solid #4a6571; color: #1e2326; }
.thead > span, .thead > span:last-child { border-right: 1px solid #5b7782; padding: 0 6px 0 0; text-align: right; letter-spacing: -.25px; }
.thead > span:nth-child(2) { background: #cbcbd0; }
.thead > span:nth-child(3) { text-align: center; padding: 0 0 0 17px; letter-spacing: -.4px; }
.thead > span:nth-child(4) { padding-right: 14px; letter-spacing: -.43px; }
.tbl .thead > span:last-child { padding-right: 13px; letter-spacing: -.4px; }
.sbar { width: 15px; display: flex; flex-direction: column; }
.shead { height: 24px; background: linear-gradient(#f8f8fa, #dfe1e5 50%, #e9ebee); border-bottom: 1px solid #73767e; }
.sbtn { height: 17px; border-left: 1px solid #a0a3a8; background: linear-gradient(90deg, #eceeef, #f3f4f5 50%, #d9dbde); }
.track { flex: 1; border-left: 1px solid #7b7e84; background: #e6e8ea; }
.track i { display: block; height: 100%; border-radius: 0 11px 11px 0; box-shadow: inset 0 3px 3px -1px #55585d, inset 0 -3px 3px -1px #55585d; background: linear-gradient(90deg, #8c8e93, #bdbec2 25%, #cfd0d4 55%, #d6d9df 90%, #b9bbc0); }
.tline { height: 5px; margin-top: 2px; background: #b8cbdd; border-top: 1px solid #050610; border-bottom: 1px solid #6a7f98; }
.btabs { display: flex; margin-left: 10px; margin-top: -1px; height: 22px; position: relative; }
.btabs span { width: 105px; border: 1px solid #5f636c; border-top: 1px solid #10131e; border-left-color: #20242e; border-radius: 0 0 5px 5px; padding: 3px 7px 0; background: linear-gradient(#d6d9df, #f0f1f4); letter-spacing: -.35px; }
.btabs span:nth-child(2) { width: 86px; letter-spacing: -.1px; }
.btabs span:nth-child(4) { width: 135px; }
.btabs span.on { width: 87px; border-top: 0; border-color: #20364f; background: linear-gradient(#b8cbdd, #a3b8cc 40%, #d2dfe9); padding-top: 4px; letter-spacing: -.1px; }
.status { flex: 1; display: flex; justify-content: space-between; align-items: flex-start; padding: 10px 6px 0 10px; }
.task { width: 20px; height: 20px; border: 1px solid #75889b; background: #ededed; padding: 2px; }
.memory { width: 99px; height: 22px; border: 1px solid #8d9096; border-bottom: 2px solid #54585f; border-radius: 5px; background: linear-gradient(#fcfcfd, #dcdfe4 55%, #f0f1f4); display: flex; align-items: center; padding-left: 11px; font-size: 9.500px; gap: 4px; margin-top: -1px; -webkit-text-stroke: .2px #000; }
.memory i { width: 12px; height: 12px; border: 1px solid #277b2a; border-radius: 50%; background: #33c533; }
</style>
